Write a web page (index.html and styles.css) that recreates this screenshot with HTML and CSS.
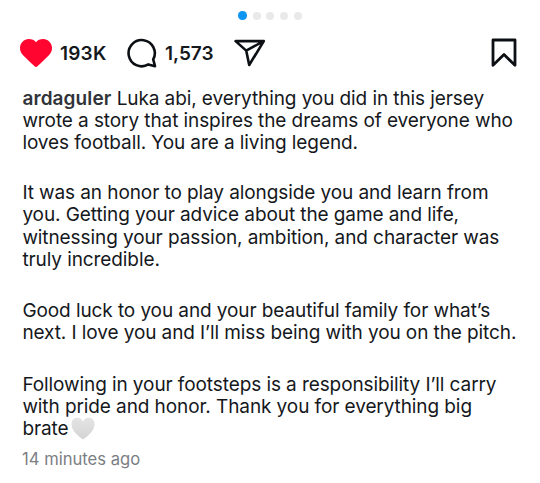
FILE: index.html
```html
<!DOCTYPE html>
<html lang="en">
<head>
    <meta charset="UTF-8">
    <meta name="viewport" content="width=device-width, initial-scale=1.0">
    <title>Post</title>
    <link rel="stylesheet" href="styles.css">
</head>
<body>
    <div class="post">
        <div class="dots">
            <span class="dot active"></span>
            <span class="dot"></span>
            <span class="dot"></span>
            <span class="dot"></span>
            <span class="dot"></span>
        </div>
        <div class="actions">
            <svg class="icon-heart" width="32" height="28" viewBox="0 0 32 28">
                <path fill="#ff0530" d="M16 28 C15 28 13.5 26.3 11 24 L3.6 16.8 C1.2 14.5 0 12 0 9 C0 4 4 0 8.8 0 C11.8 0 14.4 1.2 16 3.2 C17.6 1.2 20.2 0 23.2 0 C28 0 32 4 32 9 C32 12 30.8 14.5 28.4 16.8 L21 24 C18.5 26.3 17 28 16 28 Z"/>
            </svg>
            <span class="count likes">193K</span>
            <svg class="icon-comment" width="30" height="30" viewBox="0 0 30 30">
                <path fill="none" stroke="#0c1014" stroke-width="2.6" stroke-linejoin="round" d="M26.2 21.4 A13.1 13.1 0 1 0 21.4 26.4 L28 28.2 Z"/>
            </svg>
            <span class="count comments">1,573</span>
            <svg class="icon-share" width="32" height="28" viewBox="0 0 32 28">
                <path fill="none" stroke="#0c1014" stroke-width="2.6" stroke-linejoin="round" d="M1.6 2.1 H29.8 L15.2 26 L12.2 11.6 Z M12.2 11.6 L29.8 2.1"/>
            </svg>
            <svg class="icon-save" width="26" height="30" viewBox="0 0 26 30">
                <path fill="none" stroke="#0c1014" stroke-width="2.8" stroke-linejoin="round" d="M2 2 H24 V27.3 L13 16.6 L2 27.3 Z"/>
            </svg>
        </div>
        <div class="caption">
            <p><b>ardaguler</b> Luka abi, everything you did in this jersey<br>wrote a story that inspires the dreams of everyone who<br>loves football. You are a living legend.</p>
            <p>It was an honor to play alongside you and learn from<br>you. Getting your advice about the game and life,<br>witnessing your passion, ambition, and character was<br>truly incredible.</p>
            <p>Good luck to you and your beautiful family for what’s<br>next. I love you and I’ll miss being with you on the pitch.</p>
            <p>Following in your footsteps is a responsibility I’ll carry<br>with pride and honor. Thank you for everything big<br>brate<svg class="white-heart" width="24" height="23" viewBox="0 0 24 23">
                <defs>
                    <linearGradient id="shade" x1="0" y1="0" x2="0" y2="1">
                        <stop offset="0" stop-color="#e4e4e4"/>
                        <stop offset="1" stop-color="#d4d4d4"/>
                    </linearGradient>
                </defs>
                <path fill="url(#shade)" d="M12 22.5 C8 19.5 0.8 14.5 0.5 7.5 C0.3 3.5 3 0.8 6.2 0.8 C9 0.8 11 2.4 12 4.8 C13 2.4 15 0.8 17.8 0.8 C21 0.8 23.7 3.5 23.5 7.5 C23.2 14.5 16 19.5 12 22.5 Z"/>
            </svg></p>
        </div>
        <div class="time">14 minutes ago</div>
    </div>
</body>
</html>
```
FILE: styles.css
```css
body {
    margin: 0;
    background-color: #fff;
    color: #15181c;
    font-family: Inter, "Liberation Sans", sans-serif;
}
.post {
    height: 483px;
    overflow: hidden;
}
.dots {
    display: flex;
    align-items: center;
    justify-content: center;
    gap: 5.7px;
    height: 9px;
    padding-top: 11px;
}
.dot {
    width: 8px;
    height: 8px;
    border-radius: 50%;
    background-color: #e9e9eb;
}
.dot.active {
    width: 8.6px;
    height: 8.6px;
    background-color: #0d95f3;
}
.actions {
    display: flex;
    align-items: center;
    height: 30px;
    margin-top: 18px;
    padding: 0 23px 0 20px;
}
.count {
    padding-top: 1px;
    font-size: 19px;
    font-weight: 600;
    line-height: 30px;
    white-space: nowrap;
}
.likes {
    width: 67px;
    margin-left: 8px;
    letter-spacing: 0.2px;
}
.comments {
    width: 69px;
    margin-left: 8px;
}
.icon-save {
    margin-left: auto;
}
.caption {
    padding: 20px 0 0 22.4px;
    font-size: 19px;
    line-height: 22.2px;
    letter-spacing: -0.09px;
    white-space: nowrap;
}
.caption p {
    margin: 0 0 29.2px;
}
.caption p:first-child {
    margin-bottom: 27.6px;
}
.caption p:last-child {
    margin-bottom: 0;
}
.caption b {
    font-weight: 600;
    letter-spacing: 0.1px;
    color: #303338;
}
.white-heart {
    margin: -4px 0 -4px 2px;
    vertical-align: -5px;
    position: relative;
    top: -4px;
}
.time {
    padding-left: 22px;
    margin-top: 8.2px;
    font-size: 16.6px;
    line-height: 20px;
    color: #7b7e83;
}
```
